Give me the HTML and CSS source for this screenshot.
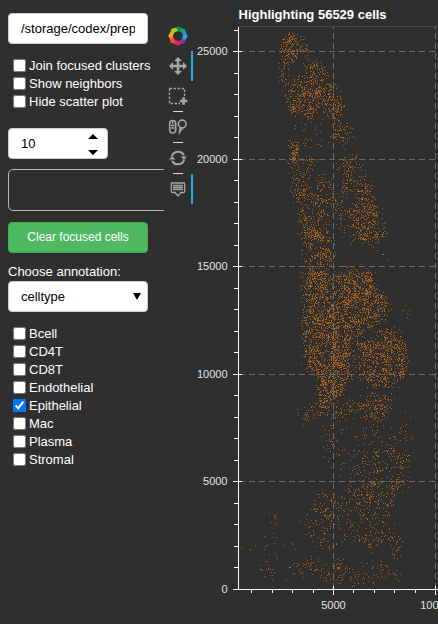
FILE: index.html
```html
<!DOCTYPE html>
<html lang="en">
<head>
<meta charset="utf-8">
<title>Cell viewer</title>
<link rel="stylesheet" href="styles.css">
</head>
<body>
<main class="app">
  <form class="sidebar">
    <input class="field path" type="text" value="/storage/codex/prep" aria-label="Path">
    <div class="checks options">
      <label><input type="checkbox">Join focused clusters</label>
      <label><input type="checkbox">Show neighbors</label>
      <label><input type="checkbox">Hide scatter plot</label>
    </div>
    <div class="field spinner"><span>10</span>
      <svg width="10" height="22" viewBox="0 0 10 22"><path d="M0 6L5 1L10 6ZM0 17H10L5 22Z"/></svg>
    </div>
    <div class="clip"><div class="empty-box"></div></div>
    <button class="clear" type="button">Clear focused cells</button>
    <div class="caption">Choose annotation:</div>
    <div class="field select"><span>celltype</span>
      <svg width="8" height="7" viewBox="0 0 8 7"><path d="M0 0H8L4 7Z"/></svg>
    </div>
    <div class="checks types">
      <label><input type="checkbox">Bcell</label>
      <label><input type="checkbox">CD4T</label>
      <label><input type="checkbox">CD8T</label>
      <label><input type="checkbox">Endothelial</label>
      <label><input type="checkbox" checked>Epithelial</label>
      <label><input type="checkbox">Mac</label>
      <label><input type="checkbox">Plasma</label>
      <label><input type="checkbox">Stromal</label>
    </div>
  </form>
  <nav class="toolbar">
    <div class="tool logo">
      <svg width="20" height="20" viewBox="-10 -10 20 20">
        <g id="wheel"></g>
      </svg>
    </div>
    <div class="tool on">
      <svg width="20" height="20" viewBox="0 0 20 20"><path class="fill" d="M10 1l4 4h-2.700v3.700H15V6l4 4-4 4v-2.700h-3.700V15H14l-4 4-4-4h2.700v-3.700H5V14l-4-4 4-4v2.700h3.700V5H6z"/></svg>
    </div>
    <div class="tool sep">
      <svg width="20" height="20" viewBox="0 0 20 20"><path class="line dash" d="M1.500 3.500H16.500V11M1.500 3.500V18.500H12"/><path class="fill" d="M14.300 12.200h2.600v2.500h2.500v2.600h-2.500v2.500h-2.600v-2.500h-2.500v-2.600h2.500z"/></svg>
    </div>
    <div class="tool sep">
      <svg width="20" height="20" viewBox="0 0 20 20"><rect class="line mid" x="1.700" y="4.500" width="6" height="12.500" rx="3"/><path class="line" d="M4.700 5v3M3 9.500h3.500M3 12h3.500"/><circle class="line mid" cx="14.200" cy="8" r="3.900"/><path class="line mid" d="M12.300 11.500L11.300 17.800M15 11.800l-3.500 4"/></svg>
    </div>
    <div class="tool sep">
      <svg width="20" height="20" viewBox="0 -1 20 20"><path class="line thick" d="M3.800 8.500A6.500 6.500 0 0 1 15.900 7.300M16.200 11.500A6.500 6.500 0 0 1 4.100 12.700"/><path class="fill" d="M12.500 8.500h6.500l-3 3.300zM1 11.500h6.500L4 8.200z"/></svg>
    </div>
    <div class="tool on">
      <svg width="20" height="20" viewBox="0 0 20 20"><path class="line" d="M4 4H16Q16.700 4 16.700 4.700V12.500Q16.700 13.500 15.500 13.500H13L10 17L7 13.500H4.500Q3.300 13.500 3.300 12.500V4.700Q3.300 4 4 4ZM5 6.500H15M5 8.500H15M5 10.500H15"/></svg>
    </div>
  </nav>
  <section class="plot">
    <svg id="plot" width="248" height="624" viewBox="190 0 248 624"></svg>
  </section>
</main>
<script src="plot.js"></script>
</body>
</html>
```
FILE: styles.css
```css
* { box-sizing: border-box; }
body {
  margin: 0;
  overflow: hidden;
  background: #2f2f2f;
  color: #fff;
  font: 13px/18px "Liberation Sans", Arial, sans-serif;
}
.app { display: flex; width: 438px; height: 624px; overflow: hidden; }
.sidebar {
  display: flex;
  flex-direction: column;
  flex: 0 0 164px;
  min-width: 0;
  padding: 13px 0 0 8px;
}
.field {
  flex: none;
  width: 140px;
  height: 31px;
  padding: 0 12px;
  border: 1px solid #ccc;
  border-radius: 4px;
  background: #fff;
  color: #000;
  font: 13px "Liberation Sans", Arial, sans-serif;
  display: flex;
  align-items: center;
  justify-content: space-between;
}
.checks { display: flex; flex-direction: column; padding-left: 5px; }
.checks label { display: flex; align-items: center; height: 18px; white-space: nowrap; }
.checks input { width: 13px; height: 13px; margin: 0 3px 1px 0; }
.options { margin-top: 13px; }
.spinner { width: 100px; margin-top: 17px; padding-right: 9px; }
.clip { margin-top: 10px; width: 156px; height: 42px; overflow: hidden; }
.empty-box { width: 180px; height: 42px; border: 1px solid #b8b8b8; border-radius: 5px; }
.clear {
  width: 140px;
  height: 31px;
  margin-top: 11px;
  padding: 0 0 2px;
  border: 1px solid #41ac50;
  border-radius: 4px;
  background: #4fb961;
  color: #fff;
  font: 12px "Liberation Sans", Arial, sans-serif;
}
.caption { margin-top: 9px; height: 19px; line-height: 19px; }
.select { padding-right: 6px; }
.types { margin-top: 13px; }
.toolbar {
  display: flex;
  flex-direction: column;
  flex: 0 0 26px;
  min-width: 0;
  padding: 21px 0 0 1px;
}
.tool {
  display: flex;
  align-items: center;
  width: 28px;
  height: 30px;
  padding-left: 3px;
  border-right: 2px solid transparent;
}
.on { border-color: #26aae1; }
.sep { height: 31px; }
.sep svg { align-self: flex-start; margin-top: 4px; }
.sep::after {
  content: "";
  align-self: flex-end;
  flex: none;
  width: 10px;
  height: 1px;
  margin-left: -15px;
  background: #d8d8d8;
}
.tool svg { flex: none; }
.fill { fill: #a1a6a9; }
.line { fill: none; stroke: #a1a6a9; stroke-width: 1.3; }
.dash { stroke-dasharray: 2.5 1.5; }
.mid { stroke-width: 1.6; }
.thick { stroke-width: 2; }
.plot { flex: 0 0 248px; min-width: 0; }
.plot svg { display: block; }
.axis { stroke: #fff; fill: none; }
.grid { stroke: #6b6b6b; stroke-dasharray: 6 4; fill: none; }
.outline { stroke: #484848; fill: none; }
.tick { fill: #e4e4e4; font: 11px "Liberation Sans", Arial, sans-serif; }
.title { fill: #fff; font: bold 13px "Liberation Sans", Arial, sans-serif; }
.cells { fill: #9c5a1c; }
.cells-bright { fill: #c46e16; }
```
FILE: plot.js
```js
const NS = 'http://www.w3.org/2000/svg';
function add(parent, name, attrs, text) {
  const el = document.createElementNS(NS, name);
  for (const key in attrs) el.setAttribute(key, attrs[key]);
  if (text) el.textContent = text;
  parent.appendChild(el);
}

const colors = ['#009c4c', '#0f9fa5', '#26a5e5', '#8b2f92', '#ec1a6a', '#f0562b', '#f9a12a', '#a6cb2a'];
colors.forEach((c, i) => add(document.getElementById('wheel'), 'path', {
  d: 'M-3 -7.400L0 -9.800L4.600 -7.400L3.900 -3.600L0 -5Z', fill: c, transform: `rotate(${i * 45})`
}));

const plot = document.getElementById('plot');
add(plot, 'path', { class: 'outline', d: 'M238 26.500H438' });

let grid = 'M333.500 589V27M435.500 589V27';
let axis = 'M238.500 27V589.500H438';
for (let i = 0; i <= 26; i++) {
  const y = Math.round(588.9 - i * 21.5) + 0.5;
  axis += i % 5 ? `M234 ${y}H238` : `M233 ${y}H242`;
  if (i && i % 5 === 0) grid += `M239 ${y}H438`;
}
for (let i = -4; i <= 5; i++) {
  const x = Math.round(333 + i * 20.4) + 0.5;
  axis += i % 5 ? `M${x} 589V593` : `M${x} 586V595`;
}

// Tissue regions: density followed by the x,y outline.
const regions = [
  [.34, 285,38, 289,33, 298,36, 298,56, 290,58, 281,50],
  [.24, 298,36, 306,42, 310,52, 307,62, 302,50],
  [.26, 282,58, 289,58, 287,82, 281,80],
  [.27, 301,72, 313,60, 322,66, 325,80, 312,86, 300,85],
  [.29, 285,84, 300,78, 303,86, 325,86, 333,81, 337,88, 326,108, 308,116, 288,110],
  [.26, 328,100, 338,96, 346,110, 340,120, 328,118],
  [.25, 333,125, 348,124, 354,139, 333,138],
  [.03, 288,112, 332,118, 350,148, 300,148],
  [.42, 289,141, 298,141, 298,164, 291,164],
  [.24, 291,164, 297,166, 298,184, 313,185, 318,205, 330,235, 334,266, 305,266, 305,250, 297,215, 293,190],
  [.20, 306,157, 312,158, 317,172, 305,170],
  [.08, 298,170, 330,178, 334,187, 298,187],
  [.19, 314,186, 336,186, 350,180, 350,195, 335,215, 320,215],
  [.16, 337,165, 347,156, 351,150, 356,154, 362,168, 369,183, 358,192, 345,182],
  [.25, 358,190, 370,186, 378,210, 386,236, 378,242, 352,240, 353,215],
  [.09, 334,210, 352,205, 352,238, 336,228],
  [.06, 368,240, 373,242, 377,250, 391,256, 392,262, 377,255],
  [.31, 305,268, 318,265, 330,278, 352,265, 370,272, 377,290, 388,298, 388,317, 366,330, 352,337, 352,370, 348,385, 335,402, 325,402, 316,370, 305,369, 303,350, 306,340, 301,325, 306,305, 301,292],
  [.28, 381,330, 398,330, 407,345, 406,365, 398,386, 378,388, 358,378, 356,350, 355,338, 366,342],
  [.24, 317,375, 335,378, 330,412, 318,416],
  [.20, 362,404, 372,388, 393,400, 388,412, 383,425, 366,418],
  [.15, 330,413, 355,395, 365,402, 360,422, 345,420, 332,423],
  [.14, 297,412, 318,400, 330,405, 322,418, 300,425],
  [.20, 399,310, 405,303, 409,315],
  [.035, 322,424, 400,425, 415,403, 411,440, 410,470, 350,485, 318,455],
  [.11, 327,435, 336,435, 336,452, 325,450],
  [.10, 350,470, 378,450, 398,430, 409,465, 405,490, 378,500],
  [.13, 345,485, 405,480, 395,500, 380,523, 365,521, 350,505],
  [.14, 320,490, 345,495, 347,512, 334,522, 310,515],
  [.10, 300,520, 325,515, 335,548, 318,548, 305,535],
  [.06, 330,520, 380,515, 365,545, 340,540],
  [.13, 357,538, 392,526, 402,534, 402,548, 394,557, 387,541, 365,550],
  [.14, 305,562, 318,555, 328,570, 340,556, 347,575, 337,583, 310,574],
  [.11, 288,566, 307,562, 307,574, 291,576],
  [.10, 340,565, 370,568, 384,560, 400,577, 378,580, 350,584],
  [.12, 271,514, 279,514, 277,520, 271,524],
  [.015, 261,535, 272,530, 300,550, 260,562],
  [.10, 261,558, 274,570, 273,577, 262,573],
  [.01, 243,550, 262,535, 262,575, 245,575]
];
function inside(p, x, y) {
  let hit = false;
  for (let i = 1, j = p.length - 2; i < p.length; j = i, i += 2) {
    if ((p[i + 1] > y) !== (p[j + 1] > y) &&
        x < (p[j] - p[i]) * (y - p[i + 1]) / (p[j + 1] - p[i + 1]) + p[i]) hit = !hit;
  }
  return hit;
}
let seed = 56529;
function random() {
  seed = (seed + 0x6D2B79F5) | 0;
  let t = Math.imul(seed ^ (seed >>> 15), 1 | seed);
  t = (t + Math.imul(t ^ (t >>> 7), 61 | t)) ^ t;
  return ((t ^ (t >>> 14)) >>> 0) / 4294967296;
}
// Coarse random lattice that makes the cells gather in small clumps.
const lattice = Array.from({ length: 12000 }, random);
function clump(x, y) {
  const gx = x / 5, gy = y / 5, ix = Math.floor(gx), iy = Math.floor(gy);
  const fx = gx - ix, fy = gy - iy, at = (a, b) => lattice[b * 90 + a];
  return (at(ix, iy) * (1 - fx) + at(ix + 1, iy) * fx) * (1 - fy) +
         (at(ix, iy + 1) * (1 - fx) + at(ix + 1, iy + 1) * fx) * fy;
}
let dim = '', bright = '';
for (let y = 28; y < 588; y++) {
  for (let x = 241; x < 420; x++) {
    // Soften each outline by testing a slightly displaced point.
    const px = x + (random() + random() - 1) * 6;
    const py = y + (random() + random() - 1) * 6;
    let d = 0;
    for (const r of regions) if (r[0] > d && inside(r, px, py)) d = r[0];
    if (random() < d * (0.25 + 1.45 * clump(x, y))) {
      if (random() < .1) bright += `M${x} ${y}h1v1h-1z`;
      else dim += `M${x} ${y}h1v1h-1z`;
    }
  }
}
add(plot, 'path', { class: 'cells', d: dim });
add(plot, 'path', { class: 'cells-bright', d: bright });
add(plot, 'path', { class: 'grid', d: grid });
add(plot, 'path', { class: 'axis', d: axis });

for (let i = 0; i <= 5; i++) {
  add(plot, 'text', { class: 'tick', x: 227.5, y: Math.round(592.9 - i * 107.5), 'text-anchor': 'end' }, String(i * 5000));
}
add(plot, 'text', { class: 'tick', x: 333.5, y: 609, 'text-anchor': 'middle' }, '5000');
add(plot, 'text', { class: 'tick', x: 435.5, y: 609, 'text-anchor': 'middle' }, '10000');
add(plot, 'text', { class: 'title', x: 238.5, y: 19 }, 'Highlighting 56529 cells');
```
